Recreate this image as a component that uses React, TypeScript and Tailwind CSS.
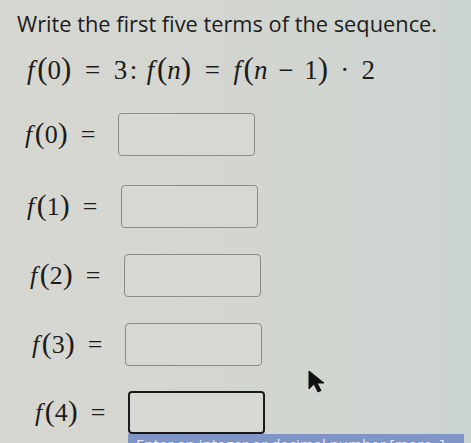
import React from "react";

const serif = { fontFamily: '"Liberation Serif", "DejaVu Serif", serif' };

const I = ({ children }: { children: React.ReactNode }) => (
  <span className="italic">{children}</span>
);
const F = () => <span className="italic mr-[0.1em]">f</span>;
const P = ({ children }: { children: React.ReactNode }) => (
  <span className="text-[1.15em] leading-none font-light">{children}</span>
);
const Eq = () => <span className="mx-[0.5em]">=</span>;

export default function App() {
  return (
    <div className="relative w-[471px] h-[443px] overflow-hidden bg-gradient-to-r from-[#d7d7d1] via-[#d3d6d0] to-[#ccd4d0]">
      <div className="pl-[17px] pt-[8px] text-[21.8px] text-[#1c1c1c]" style={{ fontFamily: '"Open Sans", sans-serif' }}>
        Write the first five terms of the sequence.
      </div>
      <div className="pl-[27px] mt-[11px] text-[27px] leading-[36px] text-[#1c1c1c] whitespace-nowrap" style={serif}>
        <F />
        <P>(</P>0<P>)</P>
        <Eq />3<span className="ml-[0.1em] mr-[0.35em]">:</span>
        <F />
        <P>(</P>
        <I>n</I>
        <P>)</P>
        <Eq />
        <F />
        <P>(</P>
        <I>n</I>
        <span className="mx-[0.4em]">−</span>1<P>)</P>
        <span className="mx-[0.45em]">·</span>2
      </div>

      <div className="flex flex-col">
        {[
          { n: 0, pl: "pl-[25px]", bx: "ml-[6px]", mt: "mt-[25px]", focus: false },
          { n: 1, pl: "pl-[27px]", bx: "ml-[7px]", mt: "mt-[29px]", focus: false },
          { n: 2, pl: "pl-[30px]", bx: "ml-[7px]", mt: "mt-[26px]", focus: false },
          { n: 3, pl: "pl-[32px]", bx: "ml-[6px]", mt: "mt-[26px]", focus: false },
          { n: 4, pl: "pl-[35px]", bx: "ml-[6px]", mt: "mt-[25px]", focus: true },
        ].map((r) => (
          <div key={r.n} className={`flex items-center ${r.mt} ${r.pl}`}>
            <div className="w-[87px] text-[26px] leading-[30px] text-[#1c1c1c] whitespace-nowrap" style={serif}>
              <F />
              <P>(</P>
              {r.n}
              <P>)</P>
              <Eq />
            </div>
            <div
              className={`${r.bx} w-[137px] h-[43px] rounded-[4px] ${
                r.focus ? "border-[2.5px] border-[#1a1a1a]" : "border-[1.5px] border-[#8a8c88]"
              } bg-[#d6d8d3]`}
            />
          </div>
        ))}
      </div>

      <div className="absolute left-[128px] top-[434px] w-[336px] h-[20px] bg-[#7f95c6] text-[#e8ecf6] text-[15px] pl-[8px] leading-[20px] whitespace-nowrap" style={{ fontFamily: '"Open Sans", sans-serif' }}>
        Enter an integer or decimal number [more..]
      </div>

      <svg className="absolute left-[307px] top-[370px]" width="20" height="24" viewBox="0 0 20 24">
        <path d="M2 1 L2 19 L7 14 L11 22 L14 20.5 L10 13 L17 13 Z" fill="#111" stroke="#111" strokeWidth="1" strokeLinejoin="round" />
      </svg>
    </div>
  );
}
